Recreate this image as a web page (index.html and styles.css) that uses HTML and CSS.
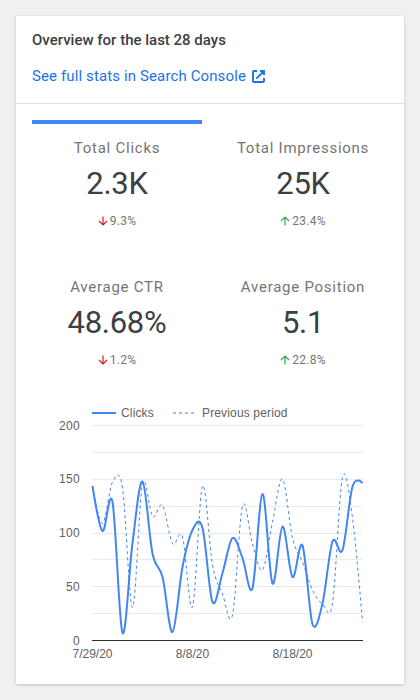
FILE: index.html
```html
<!DOCTYPE html>
<html lang="en">
<head>
<meta charset="utf-8">
<title>Search Console overview</title>
<link rel="stylesheet" href="styles.css">
</head>
<body>
<main class="card">
  <header class="card-header">
    <h1 class="title">Overview for the last 28 days</h1>
    <a class="link" href="#">See full stats in Search Console
      <svg class="link-icon" viewBox="0 0 13 13" aria-hidden="true"><path d="M5 1H2Q1 1 1 2v9q0 1 1 1h9q1 0 1-1V8M8 1h4v4M12 1L4.3 8.7" fill="none" stroke="currentColor" stroke-width="1.9"/></svg>
    </a>
  </header>
  <section class="metrics">
    <div class="metric selected">
      <div class="label">Total Clicks</div>
      <div class="value">2.3K</div>
      <div class="change down"><svg class="arrow" viewBox="0 0 10 10"><path d="M5 .5v8.2M1 5l4 4 4-4"/></svg>9.3%</div>
    </div>
    <div class="metric">
      <div class="label">Total Impressions</div>
      <div class="value">25K</div>
      <div class="change up"><svg class="arrow" viewBox="0 0 10 10"><path d="M5 9.5V1.3M1 5l4-4 4 4"/></svg>23.4%</div>
    </div>
    <div class="metric">
      <div class="label">Average CTR</div>
      <div class="value">48.68%</div>
      <div class="change down"><svg class="arrow" viewBox="0 0 10 10"><path d="M5 .5v8.2M1 5l4 4 4-4"/></svg>1.2%</div>
    </div>
    <div class="metric">
      <div class="label">Average Position</div>
      <div class="value">5.1</div>
      <div class="change up"><svg class="arrow" viewBox="0 0 10 10"><path d="M5 9.5V1.3M1 5l4-4 4 4"/></svg>22.8%</div>
    </div>
  </section>
  <svg class="chart" viewBox="16 398 388 286" role="img">
    <path class="legend-solid" d="M92 413h24"/>
    <text class="legend-text" x="121" y="417">Clicks</text>
    <path class="legend-dash" d="M173 413h22"/>
    <text class="legend-text" x="202" y="417">Previous period</text>
    <path class="grid" d="M92 425.5h271M92 452.5h271M92 479.5h271M92 506.5h271M92 533.5h271M92 559.5h271M92 586.5h271M92 613.5h271"/>
    <g class="y-axis">
      <text x="80" y="430">200</text>
      <text x="80" y="483">150</text>
      <text x="80" y="537">100</text>
      <text x="80" y="591">50</text>
      <text x="80" y="645">0</text>
    </g>
    <path class="baseline" d="M92 640.5h271"/>
    <path class="series current" id="current"/>
    <path class="series previous" id="previous"/>
    <g class="x-axis">
      <text x="92.5" y="658">7/29/20</text>
      <text x="192.5" y="658">8/8/20</text>
      <text x="292.5" y="658">8/18/20</text>
    </g>
  </svg>
</main>
<script src="chart.js"></script>
</body>
</html>
```
FILE: styles.css
```css
* { box-sizing: border-box; }
body {
  margin: 0;
  padding: 16px;
  height: 700px;
  background: #f0f0f0;
  font-family: Roboto, sans-serif;
  color: #3c4043;
}
.card {
  height: 668px;
  background: #fff;
  box-shadow: 0 1px 3px rgba(0, 0, 0, .2);
}
.card-header {
  height: 88px;
  padding: 12px 16px 0;
  border-bottom: 1px solid #e0e0e0;
}
.title {
  margin: 0 0 12px;
  font-size: 15px;
  line-height: 24px;
  font-weight: 500;
}
.link {
  display: flex;
  align-items: center;
  gap: 6px;
  color: #1a73e8;
  font-size: 15px;
  line-height: 24px;
  letter-spacing: .12px;
  text-decoration: none;
}
.link-icon { width: 13px; height: 13px; }
.metrics {
  display: grid;
  grid-template-columns: 170px 170px;
  grid-auto-rows: 139px;
  column-gap: 16px;
  padding: 16px 16px 0;
}
.metric {
  border-top: 4px solid transparent;
  padding-top: 12px;
  text-align: center;
}
.selected { border-top-color: #4285f4; }
.label {
  color: #757575;
  font-size: 15px;
  line-height: 24px;
  letter-spacing: .75px;
  white-space: nowrap;
}
.value {
  margin-top: 4px;
  font-size: 31px;
  line-height: 40px;
  letter-spacing: -.3px;
}
.change {
  display: flex;
  justify-content: center;
  align-items: center;
  gap: 2px;
  margin-top: 9px;
  color: #757575;
  font-size: 12px;
  line-height: 16px;
  letter-spacing: .25px;
}
.arrow { width: 10px; height: 10px; fill: none; stroke-width: 1.2; }
.down .arrow { stroke: #c5221f; }
.up .arrow { stroke: #34a853; }
.chart {
  display: block;
  width: 388px;
  height: 286px;
  font: 12px "Liberation Sans", sans-serif;
  fill: #616161;
}
.grid { stroke: #ebebeb; }
.baseline { stroke: #333; }
.legend-text { letter-spacing: .15px; }
.y-axis { text-anchor: end; letter-spacing: .3px; }
.x-axis { text-anchor: middle; }
.series { fill: none; stroke: #4285f4; }
.current, .legend-solid { stroke: #4285f4; stroke-width: 2; }
.previous { stroke-width: 1; stroke-dasharray: 3 3; }
.legend-dash { stroke: #9dc0fa; stroke-width: 2; stroke-dasharray: 3 3; }
```
FILE: chart.js
```js
const current = [486, 531, 502, 633, 543, 481.5, 553.5, 577, 632, 567, 530, 528, 602, 573, 538, 558, 588, 494, 583.5, 526.5, 577, 545.5, 624, 603.5, 541.5, 550, 486.5, 483];
const previous = [487, 523.5, 482, 488, 607.5, 484, 516.5, 505.5, 543.5, 537, 607, 486, 565, 594, 615, 506, 544, 570, 522, 479, 538, 562, 590, 604, 603, 477.5, 518, 622];

// Cubic segments with each tangent parallel to the line between its neighbours.
function smoothPath(ys) {
  const pts = ys.map((y, i) => [92.5 + 10 * i, y]);
  const handle = (i, sign) => {
    const p = pts[i], a = pts[i - 1], b = pts[i + 1];
    if (!a || !b) return p;
    return [p[0] + sign * (b[0] - a[0]) / 6, p[1] + sign * (b[1] - a[1]) / 6];
  };
  return "M" + pts[0] + pts.slice(1).map((p, i) =>
    "C" + handle(i, 1) + " " + handle(i + 1, -1) + " " + p).join("");
}

document.getElementById("current").setAttribute("d", smoothPath(current));
document.getElementById("previous").setAttribute("d", smoothPath(previous));
```
